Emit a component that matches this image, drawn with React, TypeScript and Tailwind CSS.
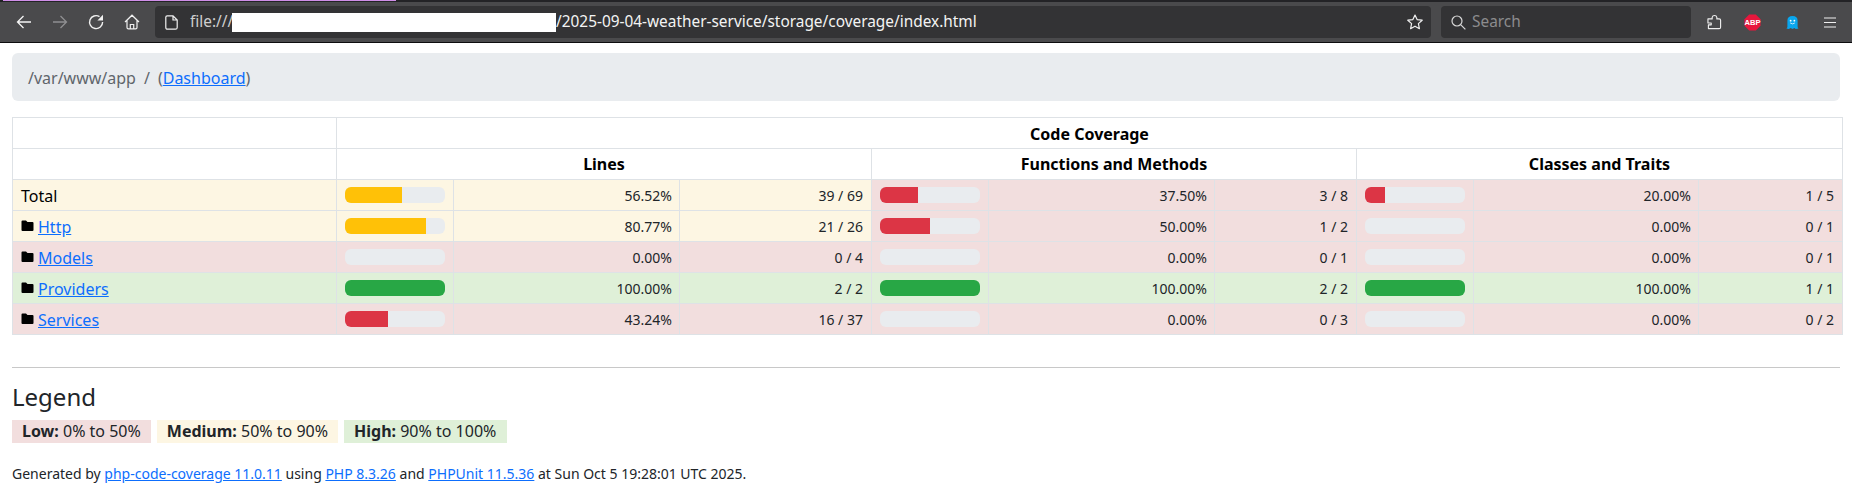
type Level = "low" | "medium" | "high";

const rowBg: Record<Level, string> = {
  low: "bg-[#f2dede]",
  medium: "bg-[#fdf6e3]",
  high: "bg-[#dff0d8]",
};

const barBg: Record<Level, string> = {
  low: "bg-[#dc3545]",
  medium: "bg-[#ffc107]",
  high: "bg-[#28a745]",
};

interface Metric {
  pct: number;
  label: string;
  count: string;
  level: Level;
}

interface Row {
  name: string;
  link: boolean;
  nameLevel: Level;
  metrics: Metric[];
}

const rows: Row[] = [
  {
    name: "Total",
    link: false,
    nameLevel: "medium",
    metrics: [
      { pct: 56.52, label: "56.52%", count: "39 / 69", level: "medium" },
      { pct: 37.5, label: "37.50%", count: "3 / 8", level: "low" },
      { pct: 20, label: "20.00%", count: "1 / 5", level: "low" },
    ],
  },
  {
    name: "Http",
    link: true,
    nameLevel: "medium",
    metrics: [
      { pct: 80.77, label: "80.77%", count: "21 / 26", level: "medium" },
      { pct: 50, label: "50.00%", count: "1 / 2", level: "low" },
      { pct: 0, label: "0.00%", count: "0 / 1", level: "low" },
    ],
  },
  {
    name: "Models",
    link: true,
    nameLevel: "low",
    metrics: [
      { pct: 0, label: "0.00%", count: "0 / 4", level: "low" },
      { pct: 0, label: "0.00%", count: "0 / 1", level: "low" },
      { pct: 0, label: "0.00%", count: "0 / 1", level: "low" },
    ],
  },
  {
    name: "Providers",
    link: true,
    nameLevel: "high",
    metrics: [
      { pct: 100, label: "100.00%", count: "2 / 2", level: "high" },
      { pct: 100, label: "100.00%", count: "2 / 2", level: "high" },
      { pct: 100, label: "100.00%", count: "1 / 1", level: "high" },
    ],
  },
  {
    name: "Services",
    link: true,
    nameLevel: "low",
    metrics: [
      { pct: 43.24, label: "43.24%", count: "16 / 37", level: "low" },
      { pct: 0, label: "0.00%", count: "0 / 3", level: "low" },
      { pct: 0, label: "0.00%", count: "0 / 2", level: "low" },
    ],
  },
];

function FolderIcon() {
  return (
    <svg viewBox="0 0 13 12" className="w-[13px] h-[12px] inline-block mr-[4px] align-[1px]">
      <path d="M0.5 1.5 Q0.5 0.5 1.5 0.5 H5 L6.5 2 H11.5 Q12.5 2 12.5 3 V10 Q12.5 11 11.5 11 H1.5 Q0.5 11 0.5 10 Z" fill="#000" />
    </svg>
  );
}

function NavIcon({ children }: { children: React.ReactNode }) {
  return <div className="w-[36px] flex justify-center">{children}</div>;
}

function Toolbar() {
  return (
    <div className="flex flex-col">
      <div className="h-[2px] bg-[#232326] pl-[3px]">
        <div className="w-[393px] h-[1px] bg-[#d08fe8]" />
      </div>
      <div className="h-[41px] bg-[#4a4a4c] flex items-center border-b border-[#0c0c0e] pl-[6px] text-[15.4px] font-['Noto_Sans',sans-serif]">
        <NavIcon>
          <svg viewBox="0 0 16 16" className="w-[16px] h-[16px]" fill="none" stroke="#f5f5f5" strokeWidth="1.3">
            <path d="M15 8 H1.5 M7.5 2 L1.5 8 L7.5 14" />
          </svg>
        </NavIcon>
        <NavIcon>
          <svg viewBox="0 0 16 16" className="w-[16px] h-[16px]" fill="none" stroke="#8f8f91" strokeWidth="1.3">
            <path d="M1 8 H14.5 M8.5 2 L14.5 8 L8.5 14" />
          </svg>
        </NavIcon>
        <NavIcon>
          <svg viewBox="0 0 16 16" className="w-[16px] h-[16px]">
            <path d="M11.5 2.6 A6.5 6.5 0 1 0 14.6 8" fill="none" stroke="#f0f0f0" strokeWidth="1.4" />
            <path d="M15 0.8 V6.4 H9.4 Z" fill="#f0f0f0" />
          </svg>
        </NavIcon>
        <NavIcon>
          <svg viewBox="0 0 16 16" className="w-[16px] h-[16px]" fill="none" stroke="#f0f0f0" strokeWidth="1.2">
            <path d="M1 8 L8 1.2 L15 8 M3 6.5 V13.5 Q3 14.9 4.4 14.9 H11.6 Q13 14.9 13 13.5 V6.5 M6.3 14.9 V10.5 H9.7 V14.9" />
          </svg>
        </NavIcon>
        <div className="ml-[5px] w-[1276px] h-[32px] bg-[#333335] rounded-[4px] flex items-center pl-[10px] pr-[8px] text-[#f3f3f3]">
          <svg viewBox="0 0 13 15" className="w-[13px] h-[15px] mr-[12px]" fill="none" stroke="#f0f0f0" strokeWidth="1.2">
            <path d="M2.2 0.8 H8 L12.2 5 V12.4 Q12.2 14.2 10.4 14.2 H2.6 Q0.8 14.2 0.8 12.4 V2.2 Q0.8 0.8 2.2 0.8 Z M8 0.8 V5 H12.2" />
          </svg>
          <span className="w-[42px] text-[#cfcfcf] overflow-hidden whitespace-nowrap">file:///</span>
          <span className="w-[324px] h-[19px] bg-white" />
          <span>/2025-09-04-weather-service/storage/coverage/index.html</span>
          <svg viewBox="0 0 16 16" className="w-[16px] h-[16px] ml-auto" fill="none" stroke="#f0f0f0" strokeWidth="1.2" strokeLinejoin="round">
            <path d="M8 1 L10.1 5.6 L15.2 6.2 L11.4 9.6 L12.4 14.7 L8 12.2 L3.6 14.7 L4.6 9.6 L0.8 6.2 L5.9 5.6 Z" />
          </svg>
        </div>
        <div className="ml-[10px] w-[250px] h-[32px] bg-[#333335] rounded-[4px] flex items-center pl-[10px] text-[#8c8c8e]">
          <svg viewBox="0 0 15 15" className="w-[15px] h-[15px] mr-[6px]" fill="none" stroke="#d8d8d8" strokeWidth="1.2">
            <circle cx="6" cy="6" r="5" />
            <path d="M9.6 9.6 L14.4 14.4" />
          </svg>
          Search
        </div>
        <div className="ml-[4px] flex items-center">
          <div className="w-[38px] flex justify-center">
            <svg viewBox="0 0 16 16" className="w-[15px] h-[16px]" fill="none" stroke="#f0f0f0" strokeWidth="1.2" strokeLinejoin="round">
              <path d="M1.5 15 H13 Q14.5 15 14.5 13.5 V6 Q14.5 4.7 13 4.7 H10.5 V3 Q10 1 8 1 Q6 1 5.5 3 V4.7 H1 V9 H4.5 V11 H1.5 Z" />
            </svg>
          </div>
          <div className="w-[38px] flex justify-center">
            <svg viewBox="0 0 18 18" className="w-[17px] h-[17px]">
              <polygon points="5.5,0.5 12.5,0.5 17.5,5.5 17.5,12.5 12.5,17.5 5.5,17.5 0.5,12.5 0.5,5.5" fill="#e8173d" />
              <text x="9" y="12" textAnchor="middle" fontSize="8" fontWeight="700" fill="#fff" fontFamily="Liberation Sans, sans-serif">ABP</text>
            </svg>
          </div>
          <div className="w-[38px] ml-[2px] flex justify-center">
            <svg viewBox="0 0 14 16" className="w-[13px] h-[15px]">
              <path d="M0.5 14.5 L1.5 13 V6 Q1.5 1 7 1 Q12.5 1 12.5 6 V13 L13.5 14.5 L10.5 15 L9 14 L7 15 L5 14 L3 15 Z" fill="#09a6ee" />
              <circle cx="5" cy="6" r="1" fill="#fff" />
              <circle cx="9" cy="6" r="1" fill="#fff" />
              <path d="M4.5 8.5 Q7 10.5 9.5 8.5" stroke="#fff" strokeWidth="0.8" fill="none" />
            </svg>
          </div>
          <div className="w-[38px] flex justify-center">
            <svg viewBox="0 0 12 11" className="w-[12px] h-[11px]" stroke="#f0f0f0" strokeWidth="1.2">
              <path d="M0 1 H12 M0 5.5 H12 M0 10 H12" />
            </svg>
          </div>
        </div>
      </div>
    </div>
  );
}

function Bar({ metric }: { metric: Metric }) {
  return (
    <div className="w-[100px] h-[16px] bg-[#e9ecef] rounded-[6px] overflow-hidden">
      <div className={`h-full ${barBg[metric.level]}`} style={{ width: `${metric.pct}%` }} />
    </div>
  );
}

function MetricCells({ metric, cell }: { metric: Metric; cell: string }) {
  return (
    <>
      <td className={`${cell} ${rowBg[metric.level]} pl-[8px]`}>
        <Bar metric={metric} />
      </td>
      <td className={`${cell} ${rowBg[metric.level]} text-right pr-[7px]`}>{metric.label}</td>
      <td className={`${cell} ${rowBg[metric.level]} text-right pr-[8px]`}>{metric.count}</td>
    </>
  );
}

function CoverageTable() {
  const cell = "border border-[#dee2e6] h-[31px] p-0";
  const head = `${cell} text-[#000] font-bold text-center text-[16px]`;
  return (
    <table className="mt-[16px] mx-[12px] w-[1830px] table-fixed border-collapse text-[14px] text-[#212529]">
      <colgroup>
        <col className="w-[324px]" />
        <col className="w-[117px]" />
        <col className="w-[226px]" />
        <col className="w-[192px]" />
        <col className="w-[117px]" />
        <col className="w-[226px]" />
        <col className="w-[142px]" />
        <col className="w-[117px]" />
        <col className="w-[225px]" />
        <col className="w-[144px]" />
      </colgroup>
      <thead>
        <tr>
          <td className={cell} />
          <th colSpan={9} className={`${head} pt-[1px]`}>Code Coverage</th>
        </tr>
        <tr>
          <td className={cell} />
          <th colSpan={3} className={head}>Lines</th>
          <th colSpan={3} className={head}>Functions and Methods</th>
          <th colSpan={3} className={head}>Classes and Traits</th>
        </tr>
      </thead>
      <tbody>
        {rows.map((row) => (
          <tr key={row.name}>
            <td className={`${cell} ${rowBg[row.nameLevel]} pl-[8px] pt-[1px] text-[16px] text-[#000] leading-[24px]`}>
              {row.link ? (
                <>
                  <FolderIcon />
                  <a href="#" className="text-[#0d6efd] underline">{row.name}</a>
                </>
              ) : (
                row.name
              )}
            </td>
            {row.metrics.map((m, i) => (
              <MetricCells key={i} metric={m} cell={cell} />
            ))}
          </tr>
        ))}
      </tbody>
    </table>
  );
}

export default function App() {
  return (
    <div className="w-[1852px] h-[492px] overflow-hidden bg-white font-['Noto_Sans',sans-serif] text-[#212529]">
      <Toolbar />
      <div className="mt-[10px] mx-[12px] h-[48px] bg-[#e9ecef] rounded-[6px] flex items-center pl-[16px] pt-[1px] text-[16px] text-[#5f656b]">
        <span>/var/www/app</span>
        <span className="mx-[8px]">/</span>
        <span>(</span>
        <a href="#" className="text-[#0d6efd] underline">Dashboard</a>
        <span>)</span>
      </div>
      <CoverageTable />
      <div className="mx-[12px] mt-[32px] border-t border-[#c8c8c8]" />
      <h4 className="mx-[12px] mt-[14px] text-[24px] leading-[29px]">Legend</h4>
      <p className="mx-[12px] mt-[9px] flex gap-[6px] text-[16px] leading-[23px]">
        <span className="bg-[#f2dede] px-[10px] h-[23px]"><b>Low:</b> 0% to 50%</span>
        <span className="bg-[#fdf6e3] px-[10px] h-[23px]"><b>Medium:</b> 50% to 90%</span>
        <span className="bg-[#dff0d8] px-[10px] pr-[11px] h-[23px]"><b>High:</b> 90% to 100%</span>
      </p>
      <p className="mx-[12px] mt-[20px] text-[14px]">
        Generated by <a href="#" className="text-[#0d6efd] underline">php-code-coverage 11.0.11</a> using{" "}
        <a href="#" className="text-[#0d6efd] underline">PHP 8.3.26</a> and{" "}
        <a href="#" className="text-[#0d6efd] underline">PHPUnit 11.5.36</a> at Sun Oct 5 19:28:01 UTC 2025.
      </p>
    </div>
  );
}
